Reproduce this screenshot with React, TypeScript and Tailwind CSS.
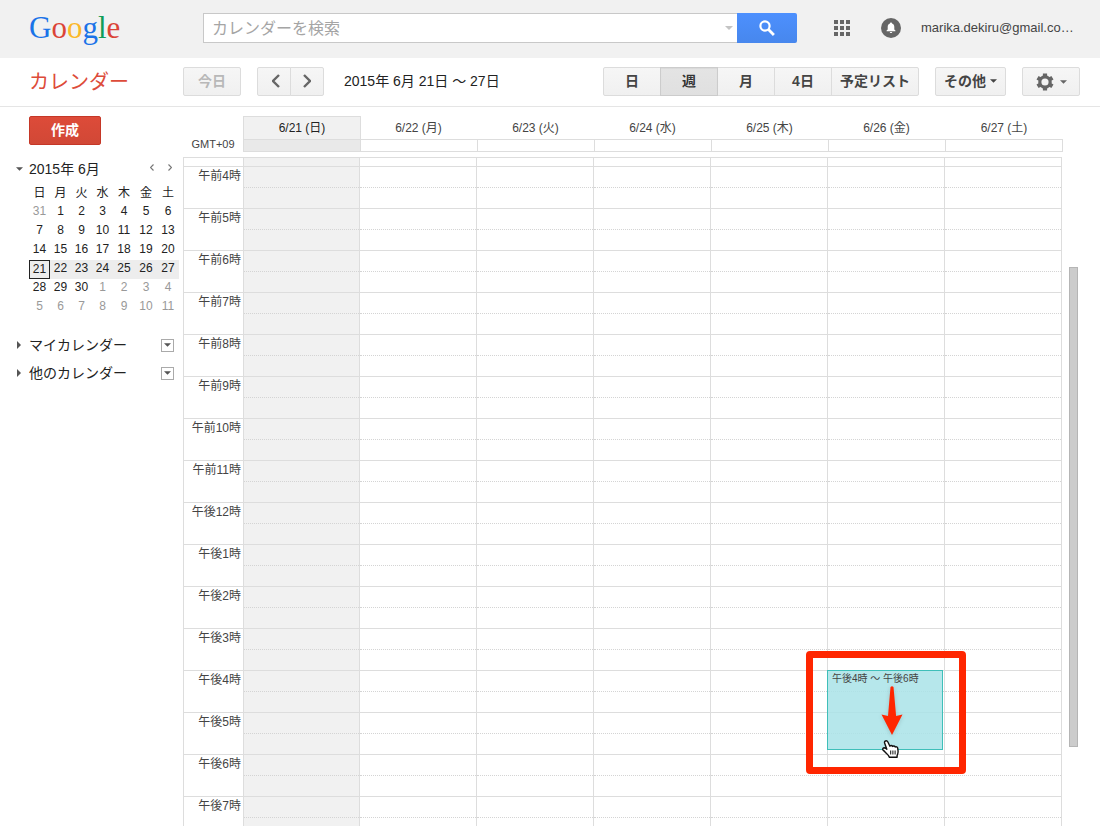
import React from "react";

const days = ["6/21 (日)", "6/22 (月)", "6/23 (火)", "6/24 (水)", "6/25 (木)", "6/26 (金)", "6/27 (土)"];

const hours = [
  "午前4時", "午前5時", "午前6時", "午前7時", "午前8時", "午前9時", "午前10時", "午前11時",
  "午後12時", "午後1時", "午後2時", "午後3時", "午後4時", "午後5時", "午後6時", "午後7時",
];

const weekdays = ["日", "月", "火", "水", "木", "金", "土"];

const weeks = [
  [31, 1, 2, 3, 4, 5, 6],
  [7, 8, 9, 10, 11, 12, 13],
  [14, 15, 16, 17, 18, 19, 20],
  [21, 22, 23, 24, 25, 26, 27],
  [28, 29, 30, 1, 2, 3, 4],
  [5, 6, 7, 8, 9, 10, 11],
];

const isOtherMonth = (week: number, day: number) =>
  (week === 0 && day > 20) || (week >= 4 && day < 20);

const button =
  "h-[29px] border border-[#dcdcdc] bg-linear-to-b from-[#f6f6f6] to-[#f0f0f0] flex items-center justify-center text-sm font-bold text-[#444] cursor-pointer";

const Caret = ({ className }: { className: string }) => (
  <svg viewBox="0 0 8 4" className={className} aria-hidden="true">
    <path d="M0 0h8L4 4z" fill="currentColor" />
  </svg>
);

const Chevron = ({ className, flip }: { className: string; flip?: boolean }) => (
  <svg viewBox="0 0 8 14" className={className} fill="none" stroke="currentColor" strokeWidth="2.4" aria-hidden="true">
    <path d={flip ? "M1 1l6 6-6 6" : "M7 1L1 7l6 6"} />
  </svg>
);

const Logo = () => (
  <a
    href="#"
    className="w-[174px] shrink-0 text-[31px] leading-[40px]"
    style={{ fontFamily: '"Liberation Serif", serif' }}
  >
    <span className="text-[#1a73e8]">G</span>
    <span className="text-[#db4437]">o</span>
    <span className="text-[#fbb829]">o</span>
    <span className="text-[#1a73e8]">g</span>
    <span className="text-[#109d58]">l</span>
    <span className="text-[#db4437]">e</span>
  </a>
);

const Header = () => (
  <header className="h-[58px] shrink-0 bg-[#f1f1f1] flex items-center pl-[29px] pr-[27px] pb-0.5">
    <Logo />
    <form className="flex-1 h-[30px] flex" onSubmit={(e) => e.preventDefault()}>
      <div className="flex-1 bg-white border border-r-0 border-[#c8c8c8] flex items-center">
        <input
          type="text"
          aria-label="カレンダーを検索"
          placeholder="カレンダーを検索"
          className="flex-1 min-w-0 px-2 pt-0.5 text-base leading-6 outline-none placeholder:text-[#a5a5a5]"
        />
        <button type="button" aria-label="検索オプション" className="px-1 text-[#c4c4c4]">
          <Caret className="w-2 h-1" />
        </button>
      </div>
      <button
        type="submit"
        aria-label="検索"
        className="w-[60px] rounded-r-xs bg-linear-to-b from-[#4d90fe] to-[#4787ed] flex items-center justify-center text-white cursor-pointer"
      >
        <svg viewBox="0 0 16 16" className="w-4 h-4" fill="none" stroke="currentColor" aria-hidden="true">
          <circle cx="6" cy="6" r="4.6" strokeWidth="2.2" />
          <path d="M9.5 9.5l5.4 5.4" strokeWidth="2.8" />
        </svg>
      </button>
    </form>
    <button aria-label="アプリ" className="ml-[37px] text-[#666]">
      <svg viewBox="0 0 16 16" className="w-4 h-4" fill="currentColor" aria-hidden="true">
        <path d="M0 0h4v4H0zM6 0h4v4H6zM12 0h4v4h-4zM0 6h4v4H0zM6 6h4v4H6zM12 6h4v4h-4zM0 12h4v4H0zM6 12h4v4H6zM12 12h4v4h-4z" />
      </svg>
    </button>
    <button aria-label="通知" className="ml-[31px]">
      <svg viewBox="0 0 20 20" className="w-5 h-5" aria-hidden="true">
        <circle cx="10" cy="10" r="10" fill="#666" />
        <path d="M10 4.6c.6 0 1 .4 1 1 1.6.5 2.3 1.8 2.3 3.3v2.6l1.1 1.1v.7H5.6v-.7l1.1-1.1V8.900c0-1.500.7-2.800 2.300-3.300 0-.6.4-1 1-1zM8.800 13.900h2.400c0 .6-.5 1.100-1.200 1.100s-1.200-.5-1.200-1.100z" fill="#fff" />
      </svg>
    </button>
    <a href="#" className="ml-5 w-[152px] text-[13px] text-[#444] whitespace-nowrap">
      marika.dekiru@gmail.co…
    </a>
  </header>
);

const Toolbar = () => (
  <div className="h-[49px] shrink-0 border-b border-[#e5e5e5] flex items-center pl-[29px] pr-5 pb-0.5">
    <h1 className="w-[154px] shrink-0 pt-0.5 text-xl text-[#dd4b39]">カレンダー</h1>
    <button disabled className={`${button} w-[58px] rounded-xs text-[#b8b8b8]!`}>今日</button>
    <div className="ml-4 flex">
      <button aria-label="前の週" className={`${button} w-[34px] rounded-l-xs pl-1`}>
        <Chevron className="w-2 h-3.5 text-[#666]" />
      </button>
      <button aria-label="次の週" className={`${button} w-[34px] rounded-r-xs -ml-px`}>
        <Chevron className="w-2 h-3.5 text-[#666]" flip />
      </button>
    </div>
    <p className="ml-5 flex-1 text-sm text-[#222] whitespace-nowrap">2015年 6月 21日 〜 27日</p>
    <div className="flex">
      <button className={`${button} w-[58px] rounded-l-xs`}>日</button>
      <button
        aria-pressed="true"
        className="h-[29px] w-[58px] -ml-px z-10 border border-[#ccc] bg-linear-to-b from-[#e4e4e4] to-[#e0e0e0] inset-shadow-xs flex items-center justify-center text-sm font-bold text-[#333]"
      >
        週
      </button>
      <button className={`${button} w-[58px] -ml-px`}>月</button>
      <button className={`${button} w-[58px] -ml-px`}>4日</button>
      <button className={`${button} w-[88px] -ml-px rounded-r-xs`}>予定リスト</button>
    </div>
    <button className={`${button} ml-4 w-[71px] rounded-xs gap-1`}>
      その他
      <Caret className="w-[7px] h-1" />
    </button>
    <button aria-label="設定" className={`${button} ml-4 w-[58px] rounded-xs gap-1.5 pt-0.5 text-[#666]!`}>
      <svg viewBox="0 0 18 18" className="w-[18px] h-[18px]" fill="none" stroke="currentColor" aria-hidden="true">
        <circle cx="9" cy="9" r="5.2" strokeWidth="3.2" />
        <path d="M9 .4v3M9 14.6v3M1.550 4.700l2.600 1.500M13.850 11.800l2.600 1.500M1.550 13.300l2.600-1.500M13.850 6.200l2.600-1.500" strokeWidth="4.2" />
      </svg>
      <Caret className="w-[7px] h-1" />
    </button>
  </div>
);

const MiniCalendar = () => (
  <table className="ml-[13px] w-[150px] table-fixed border-collapse text-xs text-center text-[#222]">
    <colgroup>
      {weekdays.map((d, i) => (
        <col key={d} className={i < 4 ? "w-[21px]" : "w-[22px]"} />
      ))}
    </colgroup>
    <thead>
      <tr>
        {weekdays.map((d) => (
          <th key={d} className="h-[22px] p-0 pt-0.5 font-normal leading-4">{d}</th>
        ))}
      </tr>
    </thead>
    <tbody>
      {weeks.map((week, i) => (
        <tr key={i} className={i === 3 ? "bg-[#ededed]" : ""}>
          {week.map((day) => (
            <td key={day} className={`p-0 h-[19px] ${isOtherMonth(i, day) ? "text-[#999]" : ""}`}>
              <div className={`h-[19px] leading-[17px] ${i === 3 && day === 21 ? "border border-[#222]" : ""}`}>{day}</div>
            </td>
          ))}
        </tr>
      ))}
    </tbody>
  </table>
);

const CalendarList = ({ name }: { name: string }) => (
  <div className="h-7 flex items-center text-sm text-[#222]">
    <svg viewBox="0 0 4 8" className="w-1 h-2 mr-2" aria-hidden="true">
      <path d="M0 0v8l4-4z" fill="#555" />
    </svg>
    <h2 className="flex-1">{name}</h2>
    <button aria-label={`${name}のメニュー`} className="w-[13px] h-[13px] border border-[#aaa] flex items-center justify-center text-[#555]">
      <Caret className="w-[7px] h-1" />
    </button>
  </div>
);

const Sidebar = () => (
  <aside className="w-[183px] shrink-0 pt-[9px] pl-4">
    <button className="ml-[13px] w-[72px] h-[29px] rounded-xs border border-[#c53727] bg-linear-to-b from-[#dd4b39] to-[#d14836] pb-0.5 text-sm leading-5 font-bold text-white cursor-pointer">
      作成
    </button>
    <div className="mt-3 h-6 flex items-center text-sm text-[#222]">
      <Caret className="w-[7px] h-1 mr-1.5 text-[#555]" />
      <h2 className="flex-1">2015年 6月</h2>
      <button aria-label="前の月" className="mr-3.5 pb-1">
        <Chevron className="w-1 h-[7px] text-[#777]" />
      </button>
      <button aria-label="次の月" className="mr-[11px] pb-1">
        <Chevron className="w-1 h-[7px] text-[#777]" flip />
      </button>
    </div>
    <MiniCalendar />
    <div className="mt-3.5 pl-px pr-[9px]">
      <CalendarList name="マイカレンダー" />
      <CalendarList name="他のカレンダー" />
    </div>
  </aside>
);

const NewEvent = () => (
  <div className="absolute -top-px -left-px right-px h-20 z-10 border border-[#3fbfb9] bg-[#a9e3e8]/85 px-1 pt-0.5">
    <p className="text-[10px] leading-3 text-[#444] whitespace-nowrap">午後4時 〜 午後6時</p>
    {/* drag hint */}
    <div className="absolute -top-5 -left-[22px] -right-6 h-[123px] border-[7px] border-[#ff2600] rounded-sm" />
    <svg viewBox="0 0 24 74" className="absolute top-[15px] left-[52px] w-6 h-[74px] overflow-visible" aria-hidden="true">
      <path d="M10.500 1q1.500-1.500 3 0l2.600 29 6.400-1.500L12 49 1.500 28.500 8 30z" fill="#ff2600" className="drop-shadow-sm" />
      <path
        d="M5.400 55c1-.5 2 0 2.500 1l2 4.200c.5-.9 2.200-.9 2.700.2.700-.7 2.200-.5 2.600.6.9-.5 2.300 0 2.500 1.200l.4 2.900c.1 1.800-.4 3.200-1 4.500v1.700H9.400c-.5-1.800-1.600-2.700-3-3.900-1.200-1.100-2-2.300-3.300-3.300-.8-.7-.4-2.200.9-2.300 1.100 0 1.900.7 2.800 1.400L4.600 57c-.3-.8 0-1.700.8-2z"
        fill="#fff"
        stroke="#111"
        strokeWidth="1.4"
        strokeLinejoin="round"
      />
      <path d="M10.700 64.500v4M12.900 64.500v4M15.100 64.500v4" stroke="#111" strokeWidth="1" />
    </svg>
  </div>
);

const WeekHeader = () => (
  <div className="flex mr-[37px] text-xs text-[#444]">
    <div className="w-[60px] flex items-end justify-center text-[11px] leading-4">GMT+09</div>
    <div className="flex-1 grid grid-cols-7 border-r border-[#ddd]">
      {days.map((day, i) => (
        <div key={day}>
          <div
            className={`h-[23px] leading-[23px] border border-b-0 text-center ${
              i === 0 ? "relative -mr-px border-[#ddd] bg-[#f1f1f1] text-[#222]" : "border-transparent"
            } ${i === 6 ? "-mr-px bg-white" : ""}`}
          >
            {day}
          </div>
          <div className={`h-[13px] border border-r-0 border-[#ddd] ${i === 0 ? "bg-[#e9e9e9]" : ""}`} />
        </div>
      ))}
    </div>
  </div>
);

const WeekGrid = () => (
  <table className="flex-1 table table-fixed border-separate border-spacing-0 border-t border-[#ddd] text-xs text-[#444]">
    <colgroup>
      <col className="w-[61px]" />
      {days.map((day, i) => (
        <col key={day} className={i === 0 ? "w-[116px]" : ""} />
      ))}
    </colgroup>
    <tbody>
      <tr>
        <th className="h-2 p-0 border-x border-[#ddd]" />
        {days.map((day, i) => (
          <td key={day} className={`p-0 border-r border-[#ddd] ${i === 0 ? "bg-[#f1f1f1]" : ""}`} />
        ))}
      </tr>
      {hours.map((hour) => (
        <tr key={hour}>
          <th className="h-[42px] p-0 pr-0.5 border-x border-t border-[#ddd] font-normal text-right align-top leading-[18px] whitespace-nowrap">
            {hour}
          </th>
          {days.map((day, i) => (
            <td key={day} className={`relative h-[42px] p-0 align-top border-t border-r border-[#ddd] ${i === 0 ? "bg-[#f1f1f1]" : ""}`}>
              <div className="h-[21px] border-b border-dotted border-[#d4d4d4]" />
              {hour === "午後4時" && i === 5 && <NewEvent />}
            </td>
          ))}
        </tr>
      ))}
    </tbody>
  </table>
);

const App = () => {
  return (
    <div
      className="h-screen overflow-hidden bg-white flex flex-col"
      style={{ fontFamily: '"Liberation Sans", "Noto Sans CJK JP", sans-serif' }}
    >
      <Header />
      <Toolbar />
      <div className="flex-1 min-h-0 flex">
        <Sidebar />
        <main className="flex-1 min-w-0 pt-[9px] flex flex-col">
          <WeekHeader />
          <div className="mt-[5px] flex-1 min-h-0 overflow-hidden flex items-start">
            <WeekGrid />
            <div className="w-[38px] shrink-0 pl-[7px] pt-[110px]">
              <div className="w-[9px] h-[480px] bg-[#ccc] border border-[#b5b5b5]" />
            </div>
          </div>
        </main>
      </div>
    </div>
  );
};

export default App;
